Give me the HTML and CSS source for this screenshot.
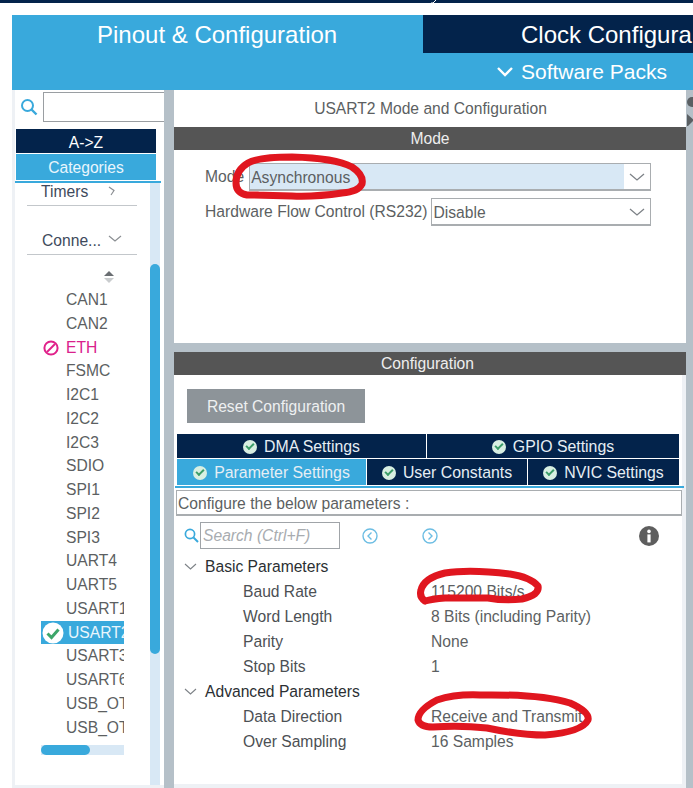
FILE: index.html
```html
<!DOCTYPE html>
<html lang="en">
<head>
    <meta charset="UTF-8">
    <meta name="viewport" content="width=device-width, initial-scale=1.0">
    <title>USART2 Mode and Configuration</title>
    <link rel="stylesheet" href="styles.css">
</head>
<body>
    <div class="topbar">
        <svg class="topbar-mark" width="8" height="3" viewBox="0 0 8 3"><path d="M6 0L3 3H1" fill="none" stroke="#fff" stroke-width="1"/></svg>
    </div>

    <div class="tabs">
        <div class="tab-main">Pinout &amp; Configuration</div>
        <div class="tab-side">
            <div class="tab-clock">Clock Configura</div>
            <div class="tab-packs">
                <svg width="18" height="12" viewBox="0 0 18 12"><path d="M2 2l7 7 7-7" fill="none" stroke="#fff" stroke-width="2.4"/></svg>
                Software Packs
            </div>
        </div>
    </div>

    <div class="workspace">
        <!-- lista de la izquierda -->
        <div class="sidebar">
            <div class="side-search">
                <svg width="18" height="18" viewBox="0 0 18 18"><circle cx="7.5" cy="7.5" r="5.5" fill="none" stroke="#39a9dc" stroke-width="2"/><path d="M11.5 11.5l5 5" stroke="#39a9dc" stroke-width="2.4"/></svg>
                <div class="side-input"></div>
            </div>
            <div class="sort-btn sort-dark">A-&gt;Z</div>
            <div class="sort-btn sort-blue">Categories</div>
            <div class="sort-line"></div>
            <div class="side-body">
                <div class="side-list">
                    <div class="cat cat-timers">
                        <span>Timers</span>
                        <svg width="10" height="10" viewBox="0 0 10 10"><path d="M2 1l5 3.500-3 4.500" fill="none" stroke="#8b8f93" stroke-width="1.2"/></svg>
                    </div>
                    <div class="cat cat-conn">
                        <span>Conne...</span>
                        <svg width="14" height="8" viewBox="0 0 14 8"><path d="M1 1l6 5 6-5" fill="none" stroke="#8b8f93" stroke-width="1.2"/></svg>
                    </div>
                    <div class="sort-icon">
                        <svg width="12" height="14" viewBox="0 0 12 14"><path d="M6 1l5 5H1z" fill="#6a6e72"/><path d="M1 8h10l-5 5z" fill="#c9ccce"/></svg>
                    </div>
                    <div class="item">CAN1</div>
                    <div class="item">CAN2</div>
                    <div class="item item-error">
                        <svg class="item-icon" width="18" height="18" viewBox="0 0 18 18"><circle cx="9" cy="9" r="6.600" fill="none" stroke="#e0218a" stroke-width="2"/><path d="M5 13l8-8" stroke="#e0218a" stroke-width="2"/></svg>
                        ETH
                    </div>
                    <div class="item">FSMC</div>
                    <div class="item">I2C1</div>
                    <div class="item">I2C2</div>
                    <div class="item">I2C3</div>
                    <div class="item">SDIO</div>
                    <div class="item">SPI1</div>
                    <div class="item">SPI2</div>
                    <div class="item">SPI3</div>
                    <div class="item">UART4</div>
                    <div class="item">UART5</div>
                    <div class="item">USART1</div>
                    <div class="item item-active">
                        <svg class="item-icon" width="22" height="22" viewBox="0 0 22 22"><circle cx="11" cy="11" r="10.500" fill="#fff"/><path d="M5.500 11.500l4 4 7-8" fill="none" stroke="#3da66a" stroke-width="3"/></svg>
                        USART2
                    </div>
                    <div class="item">USART3</div>
                    <div class="item">USART6</div>
                    <div class="item">USB_OTG_FS</div>
                    <div class="item">USB_OTG_HS</div>
                    <div class="hscroll"><div class="hscroll-thumb"></div></div>
                </div>
                <div class="vscroll"><div class="vscroll-thumb"></div></div>
            </div>
        </div>

        <div class="main">
            <div class="panel panel-mode">
                <div class="panel-title">USART2 Mode and Configuration</div>
                <div class="bar">Mode</div>
                <div class="mode-form">
                    <div class="form-row">
                        <span class="form-label">Mode</span>
                        <div class="select select-on">
                            <span class="select-text">Asynchronous</span>
                            <span class="select-arrow"><svg width="16" height="8" viewBox="0 0 16 8"><path d="M1 1l7 6 7-6" fill="none" stroke="#7d8287" stroke-width="1.3"/></svg></span>
                        </div>
                    </div>
                    <div class="form-row">
                        <span class="form-label">Hardware Flow Control (RS232)</span>
                        <div class="select">
                            <span class="select-text">Disable</span>
                            <span class="select-arrow"><svg width="16" height="8" viewBox="0 0 16 8"><path d="M1 1l7 6 7-6" fill="none" stroke="#7d8287" stroke-width="1.3"/></svg></span>
                        </div>
                    </div>
                </div>
            </div>

            <div class="panel panel-config">
                <div class="bar bar-wide">Configuration</div>
                <div class="reset-btn">Reset Configuration</div>

                <div class="cfg-tabs cfg-tabs-top">
                    <div class="cfg-tab cfg-dma"><span class="tick"></span>DMA Settings</div>
                    <div class="cfg-tab cfg-gpio"><span class="tick"></span>GPIO Settings</div>
                </div>
                <div class="cfg-tabs cfg-tabs-bottom">
                    <div class="cfg-tab cfg-param"><span class="tick"></span>Parameter Settings</div>
                    <div class="cfg-tab cfg-user"><span class="tick"></span>User Constants</div>
                    <div class="cfg-tab cfg-nvic"><span class="tick"></span>NVIC Settings</div>
                </div>
                <div class="cfg-line"></div>
                <div class="cfg-hint">Configure the below parameters :</div>

                <div class="cfg-search">
                    <svg width="15" height="15" viewBox="0 0 15 15"><circle cx="6" cy="6" r="4.600" fill="none" stroke="#39a9dc" stroke-width="1.700"/><path d="M9.500 9.500l4.500 4.500" stroke="#39a9dc" stroke-width="2"/></svg>
                    <div class="cfg-input">Search (Ctrl+F)</div>
                    <svg class="nav-prev" width="18" height="18" viewBox="0 0 18 18"><circle cx="9" cy="9" r="7" fill="none" stroke="#6cbde3" stroke-width="1.400"/><path d="M10.500 5.500L7 9l3.500 3.500" fill="none" stroke="#6cbde3" stroke-width="1.400"/></svg>
                    <svg class="nav-next" width="18" height="18" viewBox="0 0 18 18"><circle cx="9" cy="9" r="7" fill="none" stroke="#6cbde3" stroke-width="1.400"/><path d="M7.500 5.500L11 9l-3.500 3.500" fill="none" stroke="#6cbde3" stroke-width="1.400"/></svg>
                    <svg class="nav-info" width="20" height="20" viewBox="0 0 20 20"><circle cx="10" cy="10" r="10" fill="#5e5e5e"/><rect x="8.400" y="8.400" width="3.200" height="8" fill="#fff"/><circle cx="10" cy="5.400" r="1.800" fill="#fff"/></svg>
                </div>

                <div class="tree">
                    <div class="tree-group"><svg width="13" height="7" viewBox="0 0 13 7"><path d="M1 1l5.500 5 5.500-5" fill="none" stroke="#7d8287" stroke-width="1.100"/></svg>Basic Parameters</div>
                    <div class="tree-row"><span class="tree-key">Baud Rate</span><span class="tree-val">115200 Bits/s</span></div>
                    <div class="tree-row"><span class="tree-key">Word Length</span><span class="tree-val">8 Bits (including Parity)</span></div>
                    <div class="tree-row"><span class="tree-key">Parity</span><span class="tree-val">None</span></div>
                    <div class="tree-row"><span class="tree-key">Stop Bits</span><span class="tree-val">1</span></div>
                    <div class="tree-group"><svg width="13" height="7" viewBox="0 0 13 7"><path d="M1 1l5.500 5 5.500-5" fill="none" stroke="#7d8287" stroke-width="1.100"/></svg>Advanced Parameters</div>
                    <div class="tree-row"><span class="tree-key">Data Direction</span><span class="tree-val">Receive and Transmit</span></div>
                    <div class="tree-row"><span class="tree-key">Over Sampling</span><span class="tree-val">16 Samples</span></div>
                </div>
            </div>
        </div>

        <svg class="edge-icon" width="7" height="34" viewBox="0 0 7 34"><circle cx="6" cy="10" r="5" fill="#5a5f63"/><path d="M1 22l7 6-7 7z" fill="#5a5f63"/></svg>
    </div>

    <!-- marcas rojas hechas a mano encima de la captura -->
    <svg class="scribble" width="693" height="788" viewBox="0 0 693 788">
        <g fill="none" stroke="#e0161f" stroke-width="7" stroke-linecap="round" stroke-linejoin="round">
            <path d="M258 195L247 195Q236 193 236 183Q236 170 248 163Q258 157 292 157Q335 158 352 167Q364 175 362 184Q358 192 342 193Q315 197 292 196L252 195"/>
            <path d="M425 601Q419 597 421 590Q424 578 445 573Q470 569 510 574Q530 577 538 586Q540 595 522 599Q505 601 488 598L445 598Q432 599 425 601"/>
            <path d="M433 727Q420 727 418 720Q418 710 437 700Q455 694 480 695Q540 694 570 703Q590 712 588 720Q582 732 545 735Q520 735 487 728Q460 725 433 727"/>
        </g>
    </svg>
</body>
</html>
```
FILE: styles.css
```css
html, body {
    margin: 0;
    height: 788px;
    overflow: hidden;
}
body {
    position: relative;
    background: #fff;
    font-family: "Liberation Sans", Arial, sans-serif;
    font-size: 15.65px;
    color: #5c5f62;
}
svg {
    flex: none;
    display: block;
}

.topbar {
    position: relative;
    height: 3px;
    background: #03234b;
    margin-bottom: 12px;
}
.topbar-mark {
    position: absolute;
    left: 430px;
    top: 0;
}

/* pestañas de arriba */
.tabs {
    display: flex;
    height: 75px;
    margin-left: 12px;
    background: #39a9dc;
    color: #fff;
}
.tab-main {
    width: 411px;
    flex: none;
    padding: 6px 0 0 85px;
    box-sizing: border-box;
    font-size: 24px;
}
.tab-side {
    flex: 1;
    min-width: 0;
}
.tab-clock {
    height: 38px;
    box-sizing: border-box;
    padding: 6px 0 0 98px;
    background: #03234b;
    font-size: 24px;
    white-space: nowrap;
    overflow: hidden;
}
.tab-packs {
    display: flex;
    align-items: center;
    gap: 7px;
    height: 37px;
    padding-left: 73px;
    font-size: 21px;
}

.workspace {
    position: relative;
    display: flex;
    height: 698px;
    margin-left: 12px;
    background: #b5c0c8;
}
.edge-icon {
    position: absolute;
    right: 0;
    top: 2px;
}

/* lista de la izquierda */
.sidebar {
    width: 152px;
    flex: none;
    background: #fff;
    border-left: 3px solid #eef1f5;
    border-bottom: 3px solid #eef1f5;
    box-sizing: border-box;
    display: flex;
    flex-direction: column;
    overflow: hidden;
}
.side-search {
    display: flex;
    align-items: center;
    gap: 5px;
    height: 33px;
    padding: 3px 0 3px 5px;
    box-sizing: border-box;
    margin-right: -1px;
}
.side-input {
    flex: 1;
    height: 30px;
    box-sizing: border-box;
    border: 1px solid #9a9ea2;
    border-right: none;
}
.sort-btn {
    width: 140px;
    margin-left: 1px;
    text-align: center;
    color: #fff;
}
.sort-dark {
    margin-top: 6px;
    height: 24px;
    line-height: 28px;
    background: #03234b;
}
.sort-blue {
    margin-top: 1px;
    height: 26px;
    line-height: 28px;
    color: #e9f6fc;
    background: #39a9dc;
}
.sort-line {
    width: 146px;
    height: 2px;
    margin-top: 1px;
    background: #39a9dc;
    flex: none;
}
.side-body {
    flex: 1;
    display: flex;
    min-height: 0;
}
.side-list {
    width: 135px;
    flex: none;
}
.cat {
    display: flex;
    margin-left: 12px;
    width: 110px;
    box-sizing: border-box;
    border-bottom: 1px solid #c3c7cb;
    color: #3e4a5c;
}
.cat-timers {
    height: 23px;
    padding-left: 14px;
    gap: 19px;
    align-items: flex-start;
}
.cat-timers svg {
    margin-top: 3px;
}
.cat-conn {
    height: 23px;
    margin-top: 26px;
    padding-left: 15px;
    gap: 7px;
    align-items: flex-start;
}
.cat-conn svg {
    margin-top: 3px;
}
.sort-icon {
    height: 33px;
    padding: 15px 0 0 88px;
    box-sizing: border-box;
}
.item {
    position: relative;
    width: 83px;
    margin-left: 26px;
    height: 23.75px;
    line-height: 23.75px;
    padding-left: 25px;
    box-sizing: border-box;
    overflow: hidden;
    white-space: nowrap;
    color: #5c5f62;
}
.item-icon {
    position: absolute;
    left: 1px;
    top: 1px;
}
.item-error {
    color: #d9218c;
}
.item-error .item-icon {
    left: 1px;
    top: 3px;
}
.item-active {
    background: #39a9dc;
    color: #e9f6fc;
    padding-left: 27px;
}
.hscroll {
    width: 83px;
    height: 10px;
    margin: 6px 0 0 26px;
    background: #d8e8f5;
}
.hscroll-thumb {
    width: 49px;
    height: 10px;
    border-radius: 5px;
    background: #39a9dc;
}
.vscroll {
    width: 10px;
    flex: none;
    background: #d8e8f5;
}
.vscroll-thumb {
    width: 10px;
    height: 390px;
    margin-top: 81px;
    border-radius: 5px;
    background: #39a9dc;
}

/* parte derecha */
.main {
    margin-left: 10px;
    width: 512px;
    flex: none;
}
.panel {
    background: #fff;
}
.panel-mode {
    height: 253px;
    margin-bottom: 9px;
}
.panel-title {
    height: 37px;
    line-height: 37px;
    text-align: center;
    padding-left: 1px;
}
.bar {
    height: 23px;
    line-height: 23px;
    text-align: center;
    background: #555;
    color: #eee;
}
.bar-wide {
    margin-right: -4px;
    padding-right: 5px;
}
.mode-form {
    padding: 13px 35px 0 31px;
    display: flex;
    flex-direction: column;
    gap: 7px;
}
.form-row {
    display: flex;
    align-items: center;
    gap: 3px;
}
.form-label {
    white-space: nowrap;
}
.select {
    flex: 1;
    height: 28px;
    display: flex;
    box-sizing: border-box;
    border: 1px solid #a9adb0;
    border-bottom-width: 2px;
}
.select-on {
    margin-left: 2px;
}
.select-text {
    flex: 1;
    line-height: 27px;
    padding-left: 2px;
}
.select-on .select-text {
    background: #d8e8f5;
    padding-left: 1px;
}
.select-arrow {
    width: 26px;
    display: flex;
    align-items: center;
    justify-content: center;
}

.panel-config {
    height: 432px;
    border-bottom: 5px solid #eef1f5;
    border-right: 4px solid #eef1f5;
    width: 508px;
}
.reset-btn {
    width: 178px;
    height: 34px;
    line-height: 35px;
    margin: 14px 0 11px 13px;
    text-align: center;
    background: #8d9499;
    color: #eef0f1;
}
.cfg-tabs {
    display: flex;
    margin-left: 3px;
    width: 502px;
    background: #fff;
    color: #e6eef4;
    font-size: 15.85px;
}
.cfg-tabs-top {
    height: 24px;
}
.cfg-tabs-bottom {
    height: 26px;
    margin-top: 1px;
}
.cfg-tab {
    display: flex;
    align-items: center;
    justify-content: center;
    gap: 7px;
    background: #03234b;
    box-sizing: border-box;
    white-space: nowrap;
}
.cfg-tabs-top .cfg-tab { padding-top: 2px; }
.cfg-tabs-bottom .cfg-tab { padding-top: 1px; }
.cfg-dma { width: 249px; margin-right: 1px; }
.cfg-gpio { flex: 1; }
.cfg-param { width: 189px; margin-right: 1px; background: #39a9dc; }
.cfg-user { width: 160px; margin-right: 1px; }
.cfg-nvic { flex: 1; }
.tick {
    position: relative;
    width: 14px;
    height: 14px;
    flex: none;
    border-radius: 50%;
    background: #d8efe2;
}
.tick::after {
    content: "";
    position: absolute;
    left: 3px;
    top: 3px;
    width: 6px;
    height: 3px;
    border-left: 2px solid #3b9d68;
    border-bottom: 2px solid #3b9d68;
    transform: rotate(-45deg);
}
.cfg-line {
    height: 2px;
    width: 509px;
    margin: 1px 0 0 1px;
    background: #39a9dc;
}
.cfg-hint {
    width: 506px;
    height: 26px;
    line-height: 25px;
    margin: 2px 0 0 2px;
    box-sizing: border-box;
    padding-left: 1px;
    border: 1px solid #a9adb0;
    border-bottom-width: 2px;
    white-space: nowrap;
}
.cfg-search {
    display: flex;
    align-items: center;
    height: 27px;
    margin-top: 6px;
    padding-left: 10px;
}
.cfg-input {
    width: 140px;
    height: 27px;
    line-height: 26px;
    margin-left: 1px;
    padding-left: 2px;
    box-sizing: border-box;
    border: 1px solid #a0a4a8;
    color: #a8acb0;
    font-style: italic;
}
.nav-prev { margin-left: 21px; }
.nav-next { margin-left: 42px; }
.nav-info { margin-left: 200px; }

.tree {
    margin-top: 5px;
}
.tree-group {
    display: flex;
    align-items: center;
    height: 25px;
    color: #2b2f33;
    padding-left: 10px;
}
.tree-group svg {
    margin-right: 8px;
}
.tree-row {
    display: flex;
    height: 25px;
    line-height: 25px;
}
.tree-key {
    width: 188px;
    margin-left: 69px;
    flex: none;
    color: #4c5054;
}

/* encima de todo */
.scribble {
    position: absolute;
    left: 0;
    top: 0;
    pointer-events: none;
}
```
